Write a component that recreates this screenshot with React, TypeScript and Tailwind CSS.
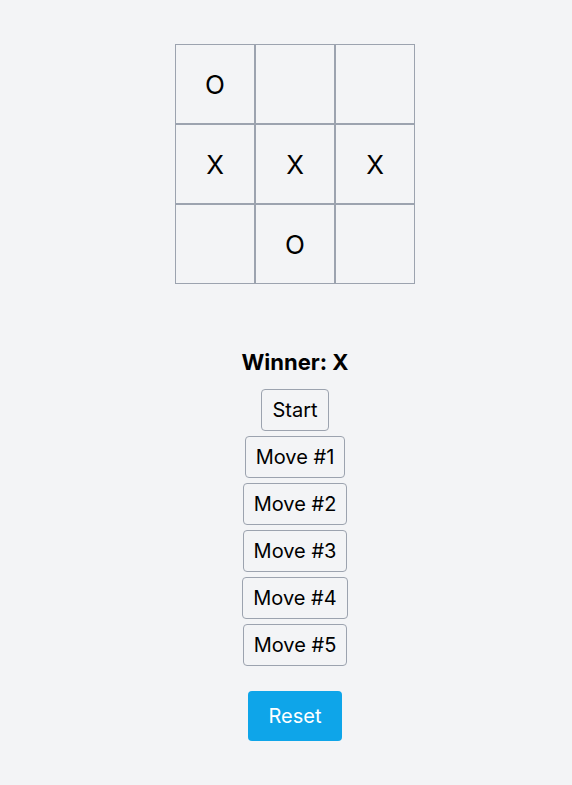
import React from "react";

const board = ["O", "", "", "X", "X", "X", "", "O", ""];

export default function App() {
  return (
    <div className="min-h-[785px] bg-[#f3f4f6] text-black pl-[18px]" style={{ fontFamily: "Inter, 'Noto Sans', sans-serif" }}>
      <div className="flex flex-col items-center pt-[44px]">
        <div className="grid grid-cols-3 w-[240px]">
          {board.map((v, i) => (
            <div key={i} className="w-[80px] h-[80px] border border-[#9ca3af] flex items-center justify-center text-[26px]">
              {v}
            </div>
          ))}
        </div>
        <div className="mt-[64px] h-[28px] leading-[28px] text-[22px] font-bold">Winner: X</div>
        <div className="mt-[13px] flex flex-col items-center gap-[5px]">
          {["Start", "Move #1", "Move #2", "Move #3", "Move #4", "Move #5"].map((t) => (
            <button key={t} className="h-[42px] px-[10px] border border-[#9ca3af] rounded text-[20px] leading-[28px] bg-[#f3f4f6]">
              {t}
            </button>
          ))}
        </div>
        <button className="mt-[25px] w-[94px] h-[50px] rounded bg-[#0ea5e9] text-white text-[20px]">Reset</button>
      </div>
    </div>
  );
}
